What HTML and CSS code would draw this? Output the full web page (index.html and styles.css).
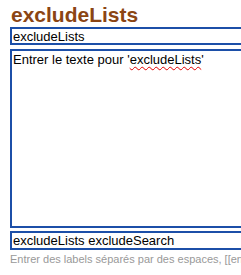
FILE: index.html
```html
<!doctype html>
<html>
  <head>
    <title>excludeLists</title>
    <link rel="stylesheet" href="styles.css">
  </head>
  <body>
    <div class="field">
      <h1 class="title">excludeLists</h1>
      <input class="box name" type="text" value="excludeLists">
      <div class="box text">Entrer le texte pour '<span class="typo">excludeLists</span>'</div>
      <input class="box labels" type="text" value="excludeLists excludeSearch">
      <div class="hint">Entrer des labels s&eacute;par&eacute;s par des espaces, [[entre crochets]] pour les liens</div>
    </div>
  </body>
</html>
```

FILE: styles.css
```css
html, body {overflow: hidden;}
body {margin: 0; padding: 3px 0 0 10px; background: #fff; font-family: "Liberation Sans", Arial, sans-serif;}
.field {width: 400px; display: flex; flex-direction: column;}
.title {margin: 0 0 1px 1px; font-size: 21px; line-height: 23px; font-weight: bold; color: #8b4513;}
.box {box-sizing: border-box; margin: 0; border: 2px solid #1c4fa8; padding: 0 1px; font-family: "Liberation Sans", Arial, sans-serif; font-size: 13px; color: #000; background: #fff; outline: none;}
.name {height: 18px;}
.text {height: 179px; margin-top: 4px; padding: 1px 1px; line-height: 15px;}
.typo {text-decoration: underline wavy #e00000; text-decoration-thickness: 1px; text-underline-offset: 2px;}
.labels {height: 19px; margin-top: 3px;}
.hint {margin-top: 3px; font-size: 11px; line-height: 13px; color: #999; white-space: nowrap;}
```
